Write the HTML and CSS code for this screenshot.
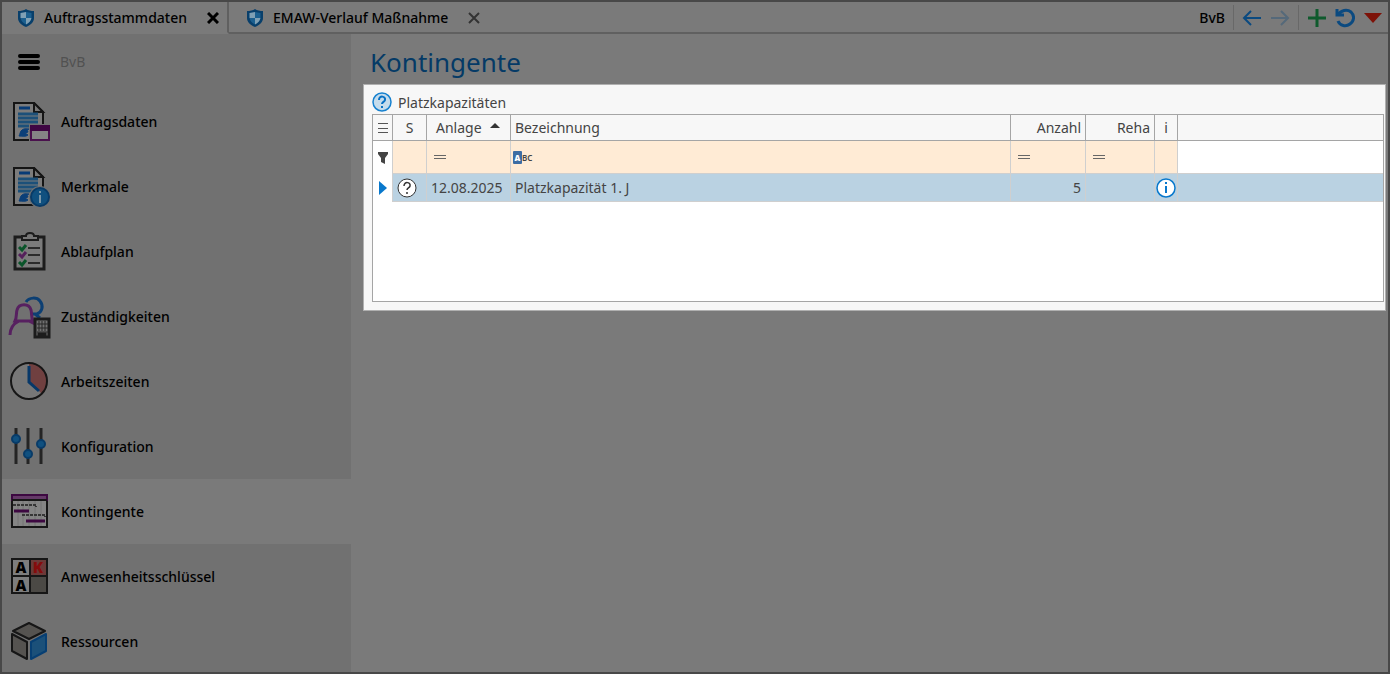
FILE: index.html
```
<!DOCTYPE html>
<html lang="de">
<head>
    <meta charset="UTF-8">
    <meta name="viewport" content="width=device-width, initial-scale=1.0">
    <title>Kontingente</title>
    <link rel="stylesheet" href="styles.css">
</head>
<body>
	<svg class="defs" width="0" height="0" aria-hidden="true">
		<symbol id="shield" viewBox="0 0 18 20">
			<path d="M9 1C7 2.500 4 3 1 3v7c0 4 3 7 8 9 5-2 8-5 8-9V3c-3 0-6-.5-8-2z" fill="#083f6b"/>
			<path d="M9 4L3.500 5v5H9zM9 10h5.500C14 13 12 15 9 16.500z" fill="#7fa0b5"/>
			<path d="M9 4l5.500 1v5H9zM3.500 10H9v6.500C6 15 4 13 3.500 10z" fill="#1b5f8f"/>
		</symbol>
		<symbol id="doc" viewBox="0 0 40 40">
			<path d="M4 1h20l9 9v28H4z" fill="#7c7c7c" stroke="#151515" stroke-width="2"/>
			<path d="M24 1v9h9z" fill="#777" stroke="#151515" stroke-width="2"/>
			<path d="M9 6h11" stroke="#073b76" stroke-width="3"/>
			<path d="M8 12h20M8 16h20M8 20h20M8 24h14" stroke="#1c5079" stroke-width="3"/>
			<path d="M9 34c1-1 1-5 3-6 2-2 7-1 7-1l-2 1 1 2-3 1 3 2c-2 2-6 1-9 1z" fill="#0b3f78" stroke="#0b3f78"/>
		</symbol>
	</svg>
	<div class="frame">
		<header class="topbar">
			<div class="tab active">
				<button class="tabName"><svg width="18" height="20"><use href="#shield"/></svg>Auftragsstammdaten</button>
				<button class="close" aria-label="Schließen"><svg width="12" height="12" viewBox="0 0 12 12"><path d="M1 1l10 10M11 1L1 11"/></svg></button>
			</div>
			<div class="tab">
				<button class="tabName"><svg width="18" height="20"><use href="#shield"/></svg>EMAW-Verlauf Maßnahme</button>
				<button class="close" aria-label="Schließen"><svg width="12" height="12" viewBox="0 0 12 12"><path d="M1 1l10 10M11 1L1 11"/></svg></button>
			</div>
			<div class="tools">
				<span class="client">BvB</span>
				<div class="group">
					<button aria-label="Zurück"><svg width="20" height="20" viewBox="0 0 20 20" fill="none" stroke="#0b4a80" stroke-width="2"><path d="M19 10H2M9 3l-7 7 7 7"/></svg></button>
					<button aria-label="Vor"><svg width="20" height="20" viewBox="0 0 20 20" fill="none" stroke="#55697a" stroke-width="2"><path d="M1 10h17M11 3l7 7-7 7"/></svg></button>
				</div>
				<div class="group">
					<button aria-label="Neu"><svg width="20" height="20" viewBox="0 0 20 20" fill="none" stroke="#0f5a2d" stroke-width="3"><path d="M10 1v18M1 10h18"/></svg></button>
					<button aria-label="Aktualisieren"><svg width="20" height="20" viewBox="0 0 20 20" fill="none" stroke="#0b4a80" stroke-width="3"><path d="M2 1v6h7M3 7C6 2 12 1 16 4c4 4 3 9-1 12-4 3-10 2-12-3"/></svg></button>
					<button aria-label="Mehr"><svg width="20" height="20" viewBox="0 0 20 20"><path d="M1 5h18l-9 10z" fill="#7d1208"/></svg></button>
				</div>
			</div>
		</header>
		<div class="content">
			<nav class="sidebar">
				<div class="menuHead">
					<button aria-label="Menü"><svg width="22" height="18" viewBox="0 0 22 18"><path d="M2 3h18M2 9h18M2 15h18" stroke="#000" stroke-width="4" stroke-linecap="round"/></svg></button>
					<span>BvB</span>
				</div>
				<a href="#" class="item">
					<svg width="40" height="40" viewBox="0 0 40 40"><use href="#doc"/><path d="M19 22h21v18H19z" fill="#717171"/><path d="M21 25h18v13H21z" fill="#858585" stroke="#4a124d" stroke-width="2"/><path d="M20 23h20v6H20z" fill="#3f0643"/></svg>
					Auftragsdaten
				</a>
				<a href="#" class="item">
					<svg width="40" height="40" viewBox="0 0 40 40"><use href="#doc"/><circle cx="30" cy="30" r="11" fill="#717171"/><circle cx="30" cy="30" r="9" fill="#10507f" stroke="#083b68" stroke-width="2"/><path d="M30 28v8M30 24v2" stroke="#7c97a8" stroke-width="2"/></svg>
					Merkmale
				</a>
				<a href="#" class="item">
					<svg width="40" height="40" viewBox="0 0 40 40" fill="none" stroke-width="2"><path d="M5 5h29v32H5z" fill="#7b7b7b" stroke="#1c1c1c" stroke-width="3"/><path d="M12 4h4c0-4 8-4 8 0h4v4H12z" fill="#777" stroke="#1c1c1c"/><path d="M18 16h12M18 23h12M18 31h12" stroke="#2b2b2b"/><path d="M9 15l3 3 4-5M9 30l3 3 4-5" stroke="#0a542a" stroke-width="3"/><path d="M9 22l3 3 4-5" stroke="#55205b" stroke-width="3"/></svg>
					Ablaufplan
				</a>
				<a href="#" class="item">
					<svg width="40" height="40" viewBox="0 0 40 40" fill="none" stroke-width="3"><path d="M16 5c3-5 11-5 14-1 4 5 2 11-3 13h-5M25 17l5 4" stroke="#0c3f73"/><path d="M5 24c2-4 1-8 2-11 2-7 12-7 14 0 1 4 0 7 2 11zM9 24C3 27 0 32 0 38M19 24l6 3" stroke="#572060"/><path d="M25 22h14v18H25z" fill="#717171" stroke="#1c1c1c"/><path d="M29 24v10M32 24v10M35 24v10M27 27h11M27 31h11M27 35h11" stroke="#292929" stroke-width="1"/><path d="M29 40v-3h6v3" fill="#1c1c1c" stroke="#1c1c1c"/></svg>
					Zuständigkeiten
				</a>
				<a href="#" class="item">
					<svg width="40" height="40" viewBox="0 0 40 40" fill="none"><circle cx="19" cy="19" r="18" fill="#777"/><path d="M19 19V1c19 0 23 20 13 31z" fill="#704040"/><circle cx="19" cy="19" r="18" stroke="#161616" stroke-width="2"/><path d="M19 4v16l10 9" stroke="#073869" stroke-width="3"/></svg>
					Arbeitszeiten
				</a>
				<a href="#" class="item">
					<svg width="40" height="40" viewBox="0 0 40 40"><path d="M6 1v36M18 1v36M31 1v36" stroke="#242424" stroke-width="3"/><g fill="#10507f" stroke="#083b68" stroke-width="2"><circle cx="6" cy="12" r="4"/><circle cx="18" cy="27" r="4"/><circle cx="31" cy="17" r="4"/></g></svg>
					Konfiguration
				</a>
				<a href="#" class="item selected" aria-current="page">
					<svg width="40" height="40" viewBox="0 0 40 40" fill="none"><path d="M2 8h35v27H2z" fill="#858585" stroke="#171717" stroke-width="2"/><path d="M8 9v25M13 9v25M19 9v25M25 9v25M31 9v25" stroke="#747474"/><path d="M2 3h35v5H2z" fill="#643a67" stroke="#3d0841" stroke-width="2"/><path d="M2 8h35" stroke="#171717" stroke-width="2"/><path d="M4 14v-1h22v2M13 24v-1h22v2" stroke="#363636" stroke-width="2" stroke-dasharray="3 1"/><path d="M4 19h15M16 29h19" stroke="#3d0841" stroke-width="3"/></svg>
					Kontingente
				</a>
				<a href="#" class="item">
					<svg width="40" height="40" viewBox="0 0 40 40"><path d="M2 2h35v34H2z" fill="#7d7d7d"/><path d="M20 2h17v17H20z" fill="#6b3a38"/><path d="M20 19h17v17H20z" fill="#4b4945"/><path d="M2 2h35v34H2zM20 2v34M2 19h35" fill="none" stroke="#161616" stroke-width="2"/><g font-family="Open Sans, sans-serif" font-size="15" font-weight="800" text-anchor="middle"><text x="11" y="16">A</text><text x="28" y="16" fill="#850c0c">K</text><text x="11" y="34">A</text></g></svg>
					Anwesenheitsschlüssel
				</a>
				<a href="#" class="item">
					<svg width="40" height="40" viewBox="0 0 40 40" stroke-width="2" stroke-linejoin="round"><path d="M19 1l16 8-16 8-16-8z" fill="#555350" stroke="#161616"/><path d="M2 12l15 8v17L2 29z" fill="#555350" stroke="#161616"/><path d="M36 12l-15 8v17l15-8z" fill="#1b5079" stroke="#073f73"/></svg>
					Ressourcen
				</a>
			</nav>
			<main>
				<h1>Kontingente</h1>
				<section class="panel">
					<h2>
						<svg width="20" height="20" viewBox="0 0 20 20"><circle cx="10" cy="10" r="9" fill="#c5dcec" stroke="#1681cf" stroke-width="1.500"/><path d="M7 8c0-5 7-4 6 0-.5 2-3 2-3 4M10 14v2" fill="none" stroke="#0871c4" stroke-width="2"/></svg>
						Platzkapazitäten
					</h2>
					<div class="grid">
						<table>
							<colgroup>
								<col class="cMark"><col class="cStatus"><col class="cDate"><col class="cName"><col class="cCount"><col class="cReha"><col class="cInfo"><col>
							</colgroup>
							<thead>
								<tr>
									<th class="mid"><svg width="12" height="12" viewBox="0 0 12 12"><path d="M1 1.500h10M1 6.500h10M1 10.500h10" stroke="#555"/></svg></th>
									<th class="mid">S</th>
									<th class="date" aria-sort="ascending">Anlage <svg width="10" height="5" viewBox="0 0 10 5"><path d="M0 5l5-5 5 5z" fill="#333"/></svg></th>
									<th>Bezeichnung</th>
									<th class="num">Anzahl</th>
									<th class="num">Reha</th>
									<th class="mid">i</th>
									<th></th>
								</tr>
							</thead>
							<tbody>
								<tr class="filter">
									<td class="mid"><svg width="12" height="14" viewBox="0 0 12 14"><path d="M1 1h10v2L8 7v6l-4-2V7L1 3z" fill="#444"/></svg></td>
									<td></td>
									<td><div class="cell"><button aria-label="Ist gleich"><svg width="12" height="6" viewBox="0 0 12 6"><path d="M0 1.500h12M0 4.500h12" stroke="#666"/></svg></button><input type="text" aria-label="Filter Anlage"></div></td>
									<td class="text"><div class="cell abc"><button aria-label="Enthält"><b>A</b><span>BC</span></button><input type="text" aria-label="Filter Bezeichnung"></div></td>
									<td><div class="cell"><button aria-label="Ist gleich"><svg width="12" height="6" viewBox="0 0 12 6"><path d="M0 1.500h12M0 4.500h12" stroke="#666"/></svg></button><input type="text" aria-label="Filter Anzahl"></div></td>
									<td><div class="cell"><button aria-label="Ist gleich"><svg width="12" height="6" viewBox="0 0 12 6"><path d="M0 1.500h12M0 4.500h12" stroke="#666"/></svg></button><input type="text" aria-label="Filter Reha"></div></td>
									<td></td>
									<td></td>
								</tr>
								<tr class="row">
									<td class="mid"><svg width="8" height="14" viewBox="0 0 8 14"><path d="M0 0l8 7-8 7z" fill="#0878cc"/></svg></td>
									<td class="status"><svg width="20" height="20" viewBox="0 0 20 20"><circle cx="10" cy="10" r="9" fill="#fff" stroke="#333" stroke-width="1"/><path d="M7 8c0-5 7-4 6 0-.5 2-3 2-3 4M10 14v2" fill="none" stroke="#333" stroke-width="1.500"/></svg></td>
									<td>12.08.2025</td>
									<td>Platzkapazität 1. J</td>
									<td class="num">5</td>
									<td></td>
									<td class="mid"><svg width="20" height="20" viewBox="0 0 20 20"><circle cx="10" cy="10" r="9" fill="#fff" stroke="#0878cc" stroke-width="1.500"/><path d="M10 8v7M10 4v2" stroke="#0878cc" stroke-width="2"/></svg></td>
									<td></td>
								</tr>
							</tbody>
						</table>
					</div>
				</section>
			</main>
		</div>
	</div>
</body>
</html>
```
FILE: styles.css
```
        *{
            box-sizing: border-box;
        }
        body,html{
            margin: 0;
            padding: 0;
            font-family: "Noto Sans", "Open Sans", sans-serif;
            font-size: 14px;
            color: #000;
            background: #7a7a7a;
        }
        svg{
            display: block;
            flex: none;
        }
        button{
            border: 0;
            padding: 0;
            background: none;
            font: inherit;
            color: inherit;
        }
        .defs{
            position: absolute;
        }
        .frame{
            min-height: 100vh;
            display: flex;
            flex-direction: column;
            outline: 2px solid #484848;
            outline-offset: -2px;
        }
        .topbar{
            height: 34px;
            display: flex;
        }
        .tab{
            display: flex;
            align-items: center;
            gap: 20px;
            padding: 3px 8px 0 17px;
            border-bottom: 2px solid #606060;
        }
        .tab.active{
            border-right: 2px solid #606060;
            border-bottom-color: #7a7a7a;
        }
        .tabName{
            display: flex;
            align-items: center;
            gap: 9px;
            font-weight: 500;
        }
        .close svg{
            fill: none;
            stroke: #333;
            stroke-width: 2;
        }
        .active .close svg{
            stroke: #000;
            stroke-width: 3;
        }
        .tools{
            flex: 1;
            display: flex;
            justify-content: flex-end;
            align-items: center;
            padding: 3px 7px 0 0;
            border-bottom: 2px solid #606060;
        }
        .client{
            margin-right: 8px;
            font-weight: 500;
        }
        .group{
            display: flex;
            align-items: center;
            gap: 8px;
            height: 25px;
            padding: 0 8px;
            border-left: 1px solid #686868;
        }
        .group:last-child{
            padding-right: 0;
        }
        .content{
            flex: 1;
            display: flex;
        }
        .sidebar{
            width: 351px;
            flex: none;
            background: #717171;
        }
        .menuHead{
            display: flex;
            align-items: center;
            gap: 20px;
            height: 55px;
            padding-left: 18px;
            color: #515151;
        }
        .item{
            display: flex;
            align-items: center;
            gap: 11px;
            height: 65px;
            padding-left: 10px;
            color: #000;
            font-weight: 500;
            text-decoration: none;
        }
        .item svg{
            overflow: visible;
        }
        .item.selected{
            background: #7a7a7a;
        }
        main{
            flex: 1;
            min-width: 0;
            padding: 8px 4px 0 12px;
        }
        h1{
            margin: 0 0 2px 7px;
            font-size: 26px;
            font-weight: 400;
            line-height: 40px;
            color: #053a66;
        }
        .panel{
            padding: 6px 1px 8px 8px;
            background: #f7f7f7;
            border: 1px solid #b0b0b0;
            color: #444;
        }
        h2{
            display: flex;
            align-items: center;
            gap: 6px;
            height: 22px;
            margin: 0 0 1px;
            font-size: 14px;
            font-weight: 400;
        }
        .grid{
            min-height: 188px;
            background: #fff;
            border: 1px solid #a5a5a5;
        }
        table{
            width: 100%;
            table-layout: fixed;
            border-collapse: separate;
            border-spacing: 0;
        }
        .cMark{width: 20px;}
        .cStatus{width: 34px;}
        .cDate{width: 84px;}
        .cName{width: 500px;}
        .cCount{width: 75px;}
        .cReha{width: 69px;}
        .cInfo{width: 23px;}
        th,td{
            padding: 0 4px;
            text-align: left;
            font-weight: 400;
            white-space: nowrap;
            border-right: 1px solid #cfcfcf;
            border-bottom: 1px solid #cfcfcf;
        }
        th{
            height: 26px;
            background: #f7f7f7;
            border-color: #a5a5a5;
        }
        th:last-child,td:last-child{
            border-right: 0;
        }
        .mid{
            padding: 0;
            text-align: center;
        }
        .mid svg{
            margin: 0 auto;
        }
        .num{
            text-align: right;
        }
        th.date{
            padding-left: 9px;
        }
        th.date svg{
            display: inline-block;
            margin-left: 5px;
            vertical-align: 5px;
        }
        .filter td{
            height: 33px;
            background: #ffebd5;
        }
        .filter .text{
            padding-left: 2px;
        }
        .filter td:first-child,.filter td:last-child{
            background: #fff;
        }
        .row td{
            height: 28px;
            background: #bad2e2;
        }
        .filter td:first-child,.row td:first-child{
            background: #fff;
            border-bottom: 0;
        }
        .row .status{
            padding-left: 4px;
        }
        .cell{
            display: flex;
            align-items: center;
            gap: 4px;
            padding-left: 3px;
        }
        .cell.abc{
            padding-left: 0;
        }
        .cell input{
            flex: 1;
            min-width: 0;
            height: 24px;
            border: 0;
            padding: 0;
            background: none;
            font: inherit;
        }
        .abc button{
            display: flex;
            align-items: center;
            font-size: 8px;
            font-weight: 600;
            line-height: 13px;
        }
        .abc b{
            width: 9px;
            border-radius: 1px;
            background: #3c6ca3;
            color: #fff;
        }
```
